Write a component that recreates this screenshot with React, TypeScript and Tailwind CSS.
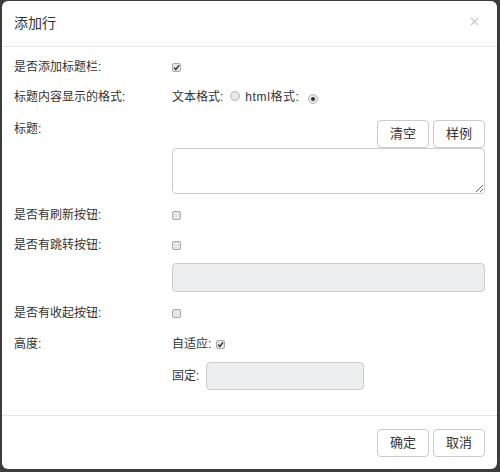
import React from "react";

const font = { fontFamily: '"Liberation Sans", "Noto Sans CJK SC", sans-serif' };

function Check({ checked }: { checked?: boolean }) {
  return (
    <span className="inline-flex h-[9px] w-[9px] items-center justify-center rounded-[2px] border border-[#a9a9a9] bg-[#e6e6e6]">
      {checked && (
        <svg viewBox="0 0 10 10" className="h-[7px] w-[7px]">
          <path d="M1.5 5.2 L4 7.8 L8.6 1.8" fill="none" stroke="#222" strokeWidth="1.8" />
        </svg>
      )}
    </span>
  );
}

function Radio({ checked }: { checked?: boolean }) {
  return (
    <span className="inline-flex h-[10px] w-[10px] items-center justify-center rounded-full border border-[#b5b5b5] bg-[#e8e8e8]">
      {checked && <span className="h-[4px] w-[4px] rounded-full bg-[#333]" />}
    </span>
  );
}

function Row({ label, children }: { label: string; children?: React.ReactNode }) {
  return (
    <div className="grid h-[20px] grid-cols-[158px_1fr] items-center">
      <span>{label}</span>
      <div className="flex items-center">{children}</div>
    </div>
  );
}

function Btn({ children }: { children: React.ReactNode }) {
  return (
    <button className="flex h-[28px] w-[52px] items-center justify-center rounded-[4px] border border-[#cccccc] bg-white text-[13px] text-[#333]">
      {children}
    </button>
  );
}

export default function App() {
  return (
    <div className="h-[472px] w-[500px] bg-[#3c3c3c] pl-[2px] pt-[1px]" style={font}>
      <div className="flex h-[468px] w-[495px] flex-col rounded-[6px] bg-white text-[12px] text-[#333]">
        <div className="flex h-[46px] items-center justify-between border-b border-[#e5e5e5] pl-[12px] pr-[18px]">
          <span className="text-[14px] text-[#333]">添加行</span>
          <svg viewBox="0 0 10 10" className="mb-[4px] h-[9px] w-[9px]">
            <path d="M1 1 L9 9 M9 1 L1 9" stroke="#c4c4c4" strokeWidth="1.4" />
          </svg>
        </div>

        <div className="flex flex-1 flex-col border-b border-[#e5e5e5] pl-[12px] pr-[12px] pt-[10px]">
          <Row label="是否添加标题栏:">
            <Check checked />
          </Row>
          <div className="mt-[10px]">
            <Row label="标题内容显示的格式:">
              <span>文本格式:</span>
              <span className="ml-[7px]"><Radio /></span>
              <span className="ml-[5px] tracking-[0.6px]">html格式:</span>
              <span className="ml-[8px]"><Radio checked /></span>
            </Row>
          </div>
          <div className="mt-[12px] grid grid-cols-[158px_1fr]">
            <span className="leading-[20px]">标题:</span>
            <div className="flex flex-col">
              <div className="mt-[1px] flex justify-end gap-[4px]">
                <Btn>清空</Btn>
                <Btn>样例</Btn>
              </div>
              <textarea className="mt-[0px] h-[46px] w-full resize-y rounded-[4px] border border-[#cccccc] outline-none" />
            </div>
          </div>
          <div className="mt-[11px]">
            <Row label="是否有刷新按钮:">
              <Check />
            </Row>
          </div>
          <div className="mt-[10px]">
            <Row label="是否有跳转按钮:">
              <Check />
            </Row>
          </div>
          <div className="mt-[8px] grid grid-cols-[158px_1fr]">
            <span />
            <div className="h-[29px] rounded-[4px] border border-[#cccccc] bg-[#eceeef]" />
          </div>
          <div className="mt-[11px]">
            <Row label="是否有收起按钮:">
              <Check />
            </Row>
          </div>
          <div className="mt-[11px]">
            <Row label="高度:">
              <span>自适应:</span>
              <span className="ml-[5px]"><Check checked /></span>
            </Row>
          </div>
          <div className="mt-[8px] grid grid-cols-[158px_1fr] items-center">
            <span />
            <div className="flex items-center">
              <span>固定:</span>
              <div className="ml-[7px] h-[28px] w-[158px] rounded-[4px] border border-[#cccccc] bg-[#eceeef]" />
            </div>
          </div>
        </div>

        <div className="flex h-[53px] items-center justify-end gap-[4px] pr-[12px] pt-[1px]">
          <Btn>确定</Btn>
          <Btn>取消</Btn>
        </div>
      </div>
    </div>
  );
}
